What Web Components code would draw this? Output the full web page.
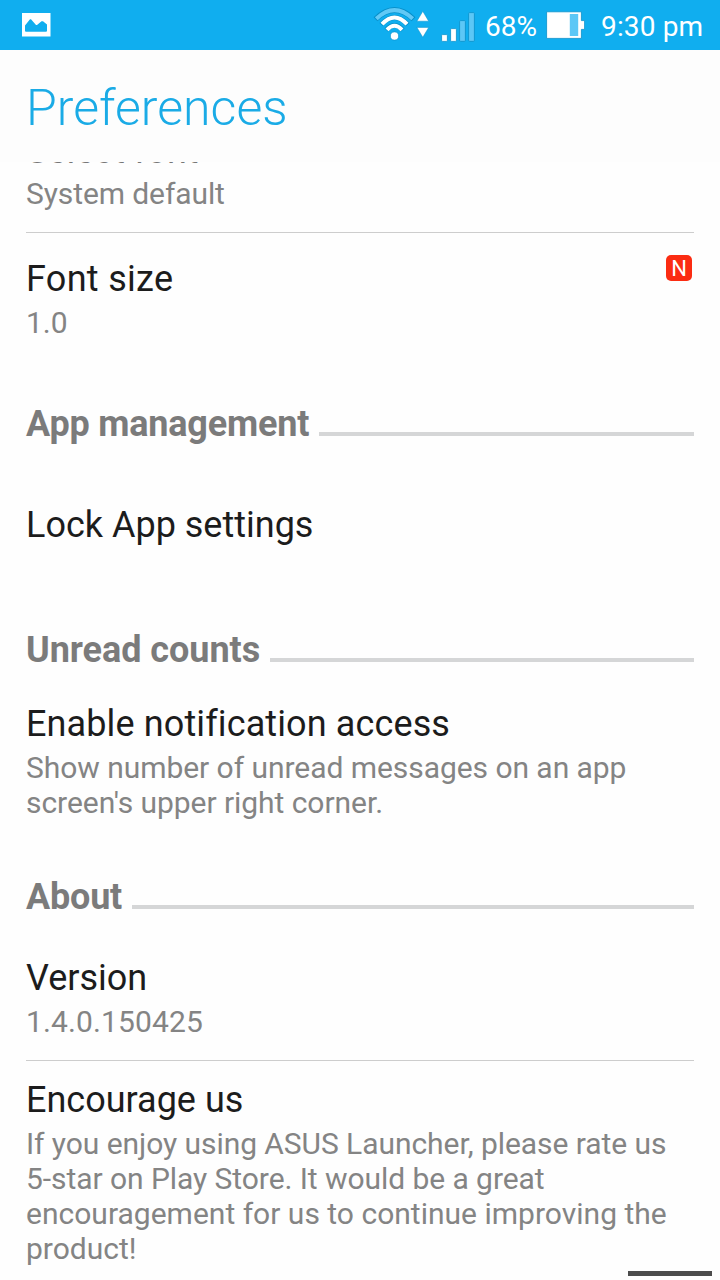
<!DOCTYPE html>
<html lang="en">
<head>
<meta charset="utf-8">
<title>Preferences</title>
<style>
  body {
    margin: 0;
    background: #fefefe;
    font-family: Roboto, "Liberation Sans", sans-serif;
  }
</style>
</head>
<body>
<prefs-screen>
  <status-bar slot="status" battery="68%" time="9:30 pm"></status-bar>
  <span slot="title">Preferences</span>

  <pref-item style="--top: 0px; --bottom: 21px; --summary-tracking: -.1px; --nudge: translateY(1px); --title-color: #777" divider>
    Select font
    <span slot="summary">System default</span>
  </pref-item>
  <pref-item style="--top: 25px; --bottom: 19px; --tracking: .3px">
    Font size
    <span slot="summary">1.0</span>
    <new-badge slot="badge">N</new-badge>
  </pref-item>

  <pref-section style="--top: 44px; --tracking: -.2px">App management</pref-section>
  <pref-item style="--top: 59px; --bottom: 33px">Lock App settings</pref-item>

  <pref-section style="--top: 45px; --tracking: -.05px">Unread counts</pref-section>
  <pref-item style="--top: 32px; --bottom: 18px; --tracking: .12px; --summary-tracking: -.05px">
    Enable notification access
    <span slot="summary">Show number of unread messages on an app screen's upper right corner.</span>
  </pref-item>

  <pref-section style="--top: 38px; --tracking: -.2px">About</pref-section>
  <pref-item style="--top: 39px; --bottom: 21px; --summary-tracking: .12px" divider>
    Version
    <span slot="summary">1.4.0.150425</span>
  </pref-item>
  <pref-item style="--top: 18px; --bottom: 20px; --summary-tracking: -.06px">
    Encourage us
    <span slot="summary">If you enjoy using ASUS Launcher, please rate us 5-star on Play Store. It would be a great <span style="letter-spacing: .01px">encouragement for us to continue improving the product!</span></span>
  </pref-item>
</prefs-screen>

<script>
class StatusBar extends HTMLElement {
  constructor() {
    super();
    this.attachShadow({ mode: "open" });
  }

  static get styles() {
    return /* css */`
      :host {
        display: flex;
        align-items: center;
        box-sizing: border-box;
        height: 50px;
        padding: 0 16px 0 22px;
        background: #10aeef;
        color: #fff;
        font-size: 28px;
        line-height: 33px;
        white-space: nowrap;
      }

      svg {
        display: block;
        flex: none;
      }

      .spacer {
        flex: 1;
      }

      .battery-text {
        width: 54px;
        margin: 3px 7px 0 9px;
        font-size: 28px;
      }

      .time {
        width: 103px;
        margin: 3px 0 0 16px;
        letter-spacing: .15px;
      }
    `;
  }

  connectedCallback() {
    this.render();
  }

  render() {
    this.shadowRoot.innerHTML = /* html */`
    <style>${StatusBar.styles}</style>
    <svg width="29" height="50" viewBox="0 0 29 50">
      <path fill="#fff" fill-rule="evenodd" d="M0 13h28.500v23.500H0z M3 25.500V30.800q0 1 1 1H24q1 0 1-1V24.500L21 21.300h-1.500L15 25h-1L9 19.200H8z"/>
    </svg>
    <div class="spacer"></div>
    <svg width="104" height="50" viewBox="372 0 104 50" fill="none">
      <path stroke="#078fc9" stroke-width="5.500" d="M375.500 19.200Q394.500 .8 413.500 19.200"/>
      <path stroke="#61c9f6" stroke-width="4" d="M376.300 18.800Q394.500 1.500 412.700 18.800"/>
      <path stroke="#078fc9" stroke-width="5" d="M381.300 24.600Q394.500 10.200 407.700 24.600"/>
      <path stroke="#fff" stroke-width="4" d="M382 24.200Q394.500 10.800 407 24.200"/>
      <path stroke="#078fc9" stroke-width="5" d="M386.300 30.200Q394.500 21 402.700 30.200"/>
      <path stroke="#fff" stroke-width="4" d="M387 29.800Q394.500 21.600 402 29.800"/>
      <circle cx="394.500" cy="36" r="4.100" fill="#fff" stroke="#078fc9" stroke-width=".6"/>
      <path fill="#fff" stroke="#078fc9" stroke-width=".5" d="M422.800 11.300l5.900 9.900h-11.800z M422.800 37.300l-5.900-9.900h11.800z"/>
      <g stroke="#078fc9" stroke-width=".8">
        <rect x="441.600" y="34.600" width="5.800" height="6.800" rx="1" fill="#fff"/>
        <rect x="450.600" y="28.600" width="5.800" height="12.800" rx="1" fill="#fff"/>
        <rect x="459.600" y="20.600" width="5.800" height="20.800" rx="1" fill="#5cc7f6"/>
        <rect x="468.600" y="12.600" width="5.800" height="28.800" rx="1" fill="#5cc7f6"/>
      </g>
    </svg>
    <span class="battery-text">${this.getAttribute("battery")}</span>
    <svg width="39" height="50" viewBox="0 0 39 50">
      <path fill="#fff" stroke="#078fc9" stroke-width=".8" d="M.6 11.800h34.800v8.800h3.200v8.800h-3.200v9H.6z"/>
      <path fill="#5cc7f6" d="M23.800 14h8.400v22h-8.400z"/>
    </svg>
    <span class="time">${this.getAttribute("time")}</span>`;
  }
}

class NewBadge extends HTMLElement {
  constructor() {
    super();
    this.attachShadow({ mode: "open" });
  }

  connectedCallback() {
    this.shadowRoot.innerHTML = /* html */`
    <style>
      :host {
        display: block;
        width: 26px;
        height: 26px;
        border-radius: 5px;
        background: #fb2c12;
        color: #fff;
        font-size: 22px;
        line-height: 27px;
        letter-spacing: 0;
        text-align: center;
      }
    </style>
    <slot></slot>`;
  }
}

class PrefSection extends HTMLElement {
  constructor() {
    super();
    this.attachShadow({ mode: "open" });
  }

  connectedCallback() {
    this.shadowRoot.innerHTML = /* html */`
    <style>
      :host {
        display: flex;
        align-items: flex-end;
        gap: 10px;
        padding-top: var(--top, 40px);
        color: #7b7b7b;
        font-size: 36px;
        font-weight: 700;
        letter-spacing: var(--tracking, 0);
        line-height: 42px;
      }

      .rule {
        flex: 1;
        height: 4px;
        margin-bottom: 9px;
        background: #d5d6d7;
      }
    </style>
    <span><slot></slot></span>
    <div class="rule"></div>`;
  }
}

class PrefItem extends HTMLElement {
  constructor() {
    super();
    this.attachShadow({ mode: "open" });
  }

  static get styles() {
    return /* css */`
      :host {
        display: flex;
        justify-content: space-between;
        align-items: flex-start;
        padding: var(--top, 20px) 0 var(--bottom, 20px);
      }

      :host([divider]) {
        border-bottom: 1px solid #cdcdcd;
      }

      .title {
        color: var(--title-color, #1c1c1c);
        font-size: 36px;
        letter-spacing: var(--tracking, 0);
        line-height: 42px;
        transform: var(--nudge, none);
      }

      .summary {
        margin-top: 5px;
        color: #848484;
        font-size: 30px;
        letter-spacing: var(--summary-tracking, 0);
        line-height: 35px;
      }

      .badge {
        margin: -3px 2px 0 0;
      }
    `;
  }

  connectedCallback() {
    this.render();
  }

  render() {
    this.shadowRoot.innerHTML = /* html */`
    <style>${PrefItem.styles}</style>
    <div>
      <div class="title"><slot></slot></div>
      <div class="summary"><slot name="summary"></slot></div>
    </div>
    <div class="badge"><slot name="badge"></slot></div>`;
  }
}

class PrefsScreen extends HTMLElement {
  constructor() {
    super();
    this.attachShadow({ mode: "open" });
  }

  static get styles() {
    return /* css */`
      :host {
        display: flex;
        flex-direction: column;
        position: relative;
        height: 1280px;
        overflow: hidden;
      }

      h1 {
        flex: none;
        box-sizing: border-box;
        height: 112px;
        margin: 0;
        padding: 28px 26px 0;
        background: #fdfdfd;
        color: #1aabe6;
        font-size: 50px;
        font-weight: 300;
        line-height: 60px;
      }

      .list {
        flex: 1;
        min-height: 0;
        overflow: hidden;
        padding: 0 26px;
      }

      /* the list is scrolled part of the way past its first title */
      .content {
        margin-top: -33px;
      }

      .nav-hint {
        position: absolute;
        right: 8px;
        bottom: 4px;
        width: 84px;
        height: 5px;
        background: #4c4c4c;
      }
    `;
  }

  connectedCallback() {
    this.render();
  }

  render() {
    this.shadowRoot.innerHTML = /* html */`
    <style>${PrefsScreen.styles}</style>
    <slot name="status"></slot>
    <h1><slot name="title"></slot></h1>
    <div class="list">
      <div class="content"><slot></slot></div>
    </div>
    <div class="nav-hint"></div>`;
  }
}

customElements.define("status-bar", StatusBar);
customElements.define("new-badge", NewBadge);
customElements.define("pref-section", PrefSection);
customElements.define("pref-item", PrefItem);
customElements.define("prefs-screen", PrefsScreen);
</script>
</body>
</html>
